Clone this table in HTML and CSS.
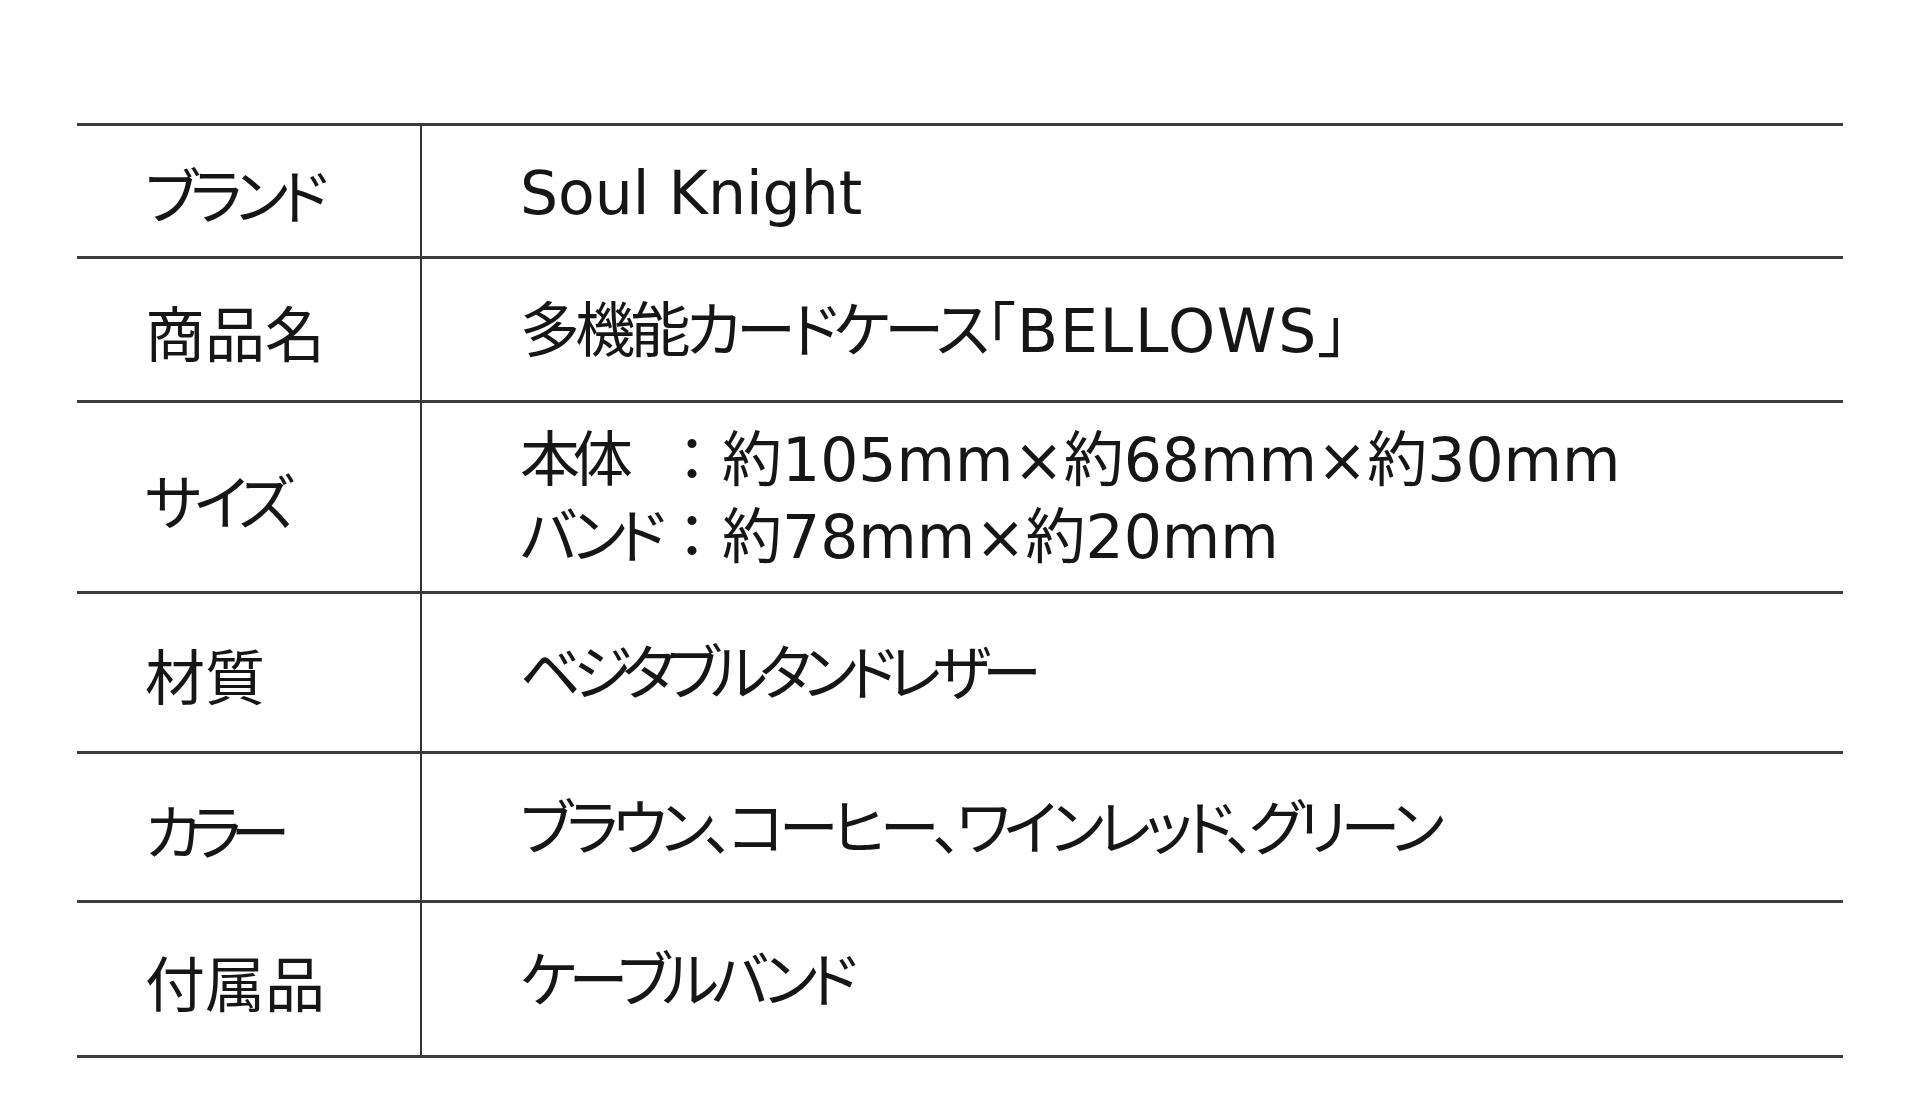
FILE: index.html
```html
<!DOCTYPE html>
<html lang="ja">
<head>
<meta charset="utf-8">
<title>商品仕様</title>
<link rel="stylesheet" href="styles.css">
</head>
<body>
<div class="spec">
  <div class="cell label tight">ブランド</div>
  <div class="cell value">Soul Knight</div>

  <div class="cell label">商品名</div>
  <div class="cell value"><span class="tight-sm">多機能カードケース</span><span class="wide">「BELLOWS」</span></div>

  <div class="cell label tight">サイズ</div>
  <div class="cell value">
    <div class="dims">
      <span class="dim-name tight">本体</span><span class="dim-text">：約105mm×約68mm×約30mm</span>
      <span class="dim-name tight">バンド</span><span class="dim-text">：約78mm×約20mm</span>
    </div>
  </div>

  <div class="cell label">材質</div>
  <div class="cell value tighter">ベジタブルタンドレザー</div>

  <div class="cell label tightest">カラー</div>
  <div class="cell value tight-md">ブラウン、コーヒー、ワインレッド、グリーン</div>

  <div class="cell label">付属品</div>
  <div class="cell value tight">ケーブルバンド</div>
</div>
</body>
</html>
```

FILE: styles.css
```css
html, body {
  margin: 0;
  padding: 0;
  background: #ffffff;
}

body {
  font-family: "DejaVu Sans", "Noto Sans CJK JP", sans-serif;
  color: #161616;
  font-feature-settings: "palt";
}

.spec {
  display: grid;
  grid-template-columns: 345px 1fr;
  grid-template-rows: 133px 144px 191px 160px 149px 155px;
  width: 1766px;
  margin: 123px 0 0 77px;
  border-bottom: 3px solid #3c3c3c;
}

.cell {
  display: flex;
  align-items: center;
  border-top: 3px solid #3c3c3c;
  font-size: 60px;
  line-height: 1;
  padding-top: 3px;
  box-sizing: border-box;
}

.label {
  font-family: "Noto Sans CJK JP", sans-serif;
  padding-left: 68px;
  border-right: 2px solid #333333;
}

.value {
  padding-left: 98px;
  white-space: nowrap;
}

.tight {
  letter-spacing: -0.12em;
}

.tighter {
  letter-spacing: -0.135em;
}

.tightest {
  letter-spacing: -0.18em;
}

.tight-md {
  letter-spacing: -0.1em;
}

.tight-sm {
  letter-spacing: -0.08em;
}

.wide {
  letter-spacing: 0.03em;
}

.dims {
  display: grid;
  grid-template-columns: 142px auto;
  line-height: 77px;
}

.dim-name {
  font-family: "DejaVu Sans", "Noto Sans CJK JP", sans-serif;
}

.dim-text {
  font-feature-settings: normal;
}
```
